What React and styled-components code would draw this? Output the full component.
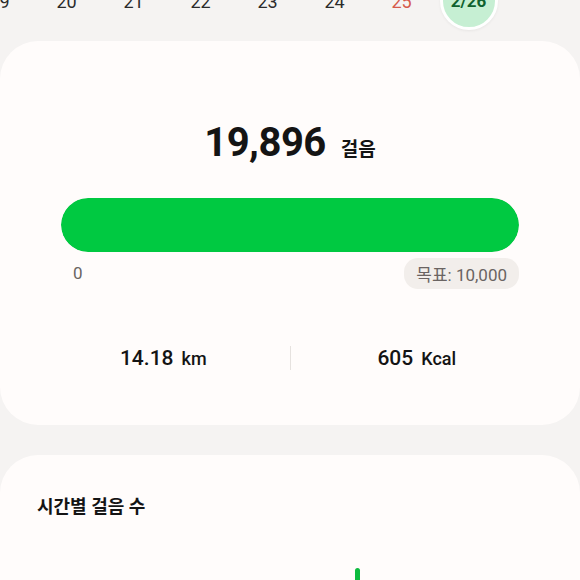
import React from "react";
import styled, { createGlobalStyle } from "styled-components";

const GlobalStyle = createGlobalStyle`
  html, body {
    margin: 0;
    padding: 0;
    background: #f5f3f2;
    overflow: hidden;
  }
  body {
    font-family: "Roboto", "Noto Sans CJK KR", sans-serif;
    color: #141414;
  }
`;

const Page = styled.div`
  width: 580px;
  height: 580px;
  display: flex;
  flex-direction: column;
  overflow: hidden;
`;

const DateStrip = styled.div`
  display: flex;
  margin-top: -28px;
  margin-left: -34px;
  height: 58px;
  flex-shrink: 0;
`;

const DateItem = styled.div`
  width: 67px;
  flex-shrink: 0;
  display: flex;
  align-items: center;
  justify-content: center;
  font-size: 18px;
  color: ${(p) => (p.$holiday ? "#d65a4c" : "#2b2b2b")};
`;

const TodayBubble = styled.div`
  width: 52px;
  height: 52px;
  border-radius: 50%;
  background: #c6efd3;
  border: 3px solid #ffffff;
  box-shadow: 0 1px 3px rgba(0, 0, 0, 0.06);
  display: flex;
  align-items: center;
  justify-content: center;
  font-size: 17px;
  font-weight: 700;
  color: #10622f;
`;

const Card = styled.section`
  background: #fffcfb;
  border-radius: 38px;
  flex-shrink: 0;
  display: flex;
  flex-direction: column;
  margin-top: ${(p) => p.$gap || 0}px;
`;

const StepsCard = styled(Card)`
  height: 384px;
  padding: 78px 61px 0;
  box-sizing: border-box;
`;

const Total = styled.div`
  display: flex;
  justify-content: center;
  align-items: baseline;
  gap: 15px;
  height: 50px;
`;

const TotalNumber = styled.span`
  font-size: 40px;
  font-weight: 700;
  letter-spacing: -0.5px;
`;

const TotalUnit = styled.span`
  font-size: 19px;
  font-weight: 700;
`;

const Track = styled.div`
  margin-top: 29px;
  height: 54px;
  border-radius: 27px;
  background: #eceae8;
  overflow: hidden;
`;

const Fill = styled.div`
  height: 100%;
  border-radius: 27px;
  background: #00c941;
`;

const Scale = styled.div`
  margin-top: 7px;
  display: flex;
  justify-content: space-between;
  align-items: center;
  height: 28px;
`;

const ScaleStart = styled.span`
  font-size: 17px;
  color: #6a6462;
  padding-left: 12px;
`;

const GoalPill = styled.span`
  background: #f2eeeb;
  border-radius: 14px;
  padding: 3px 12px;
  font-size: 17px;
  color: #6a6462;
`;

const Stats = styled.div`
  margin-top: 59px;
  display: grid;
  grid-template-columns: 1fr 1px 1fr;
  align-items: center;
  margin-left: -24px;
  margin-right: -24px;
`;

const Stat = styled.div`
  display: flex;
  justify-content: center;
  align-items: baseline;
  gap: 8px;
`;

const StatValue = styled.span`
  font-size: 21px;
  font-weight: 500;
`;

const StatUnit = styled.span`
  font-size: 18px;
  font-weight: 500;
`;

const Divider = styled.div`
  width: 1px;
  height: 24px;
  background: #e6e2df;
`;

const HourlyCard = styled(Card)`
  height: 300px;
  padding: 40px 46px 0 37px;
  box-sizing: border-box;
`;

const Title = styled.h2`
  margin: 0;
  font-size: 18px;
  font-weight: 700;
  line-height: 24px;
`;

const Chart = styled.div`
  margin-top: 49px;
  height: 160px;
  display: grid;
  grid-template-columns: repeat(24, 1fr);
  align-items: end;
`;

const BarSlot = styled.div`
  display: flex;
  justify-content: center;
  align-items: flex-end;
  height: 100%;
`;

const Bar = styled.div`
  width: 5px;
  border-radius: 3px 3px 0 0;
  background: #0dbb3f;
`;

const dates = ["19", "20", "21", "22", "23", "24", "25"];
const hourly = [0, 0, 0, 0, 0, 0, 0, 0, 0, 0, 0, 0, 0, 0, 0, 4200, 0, 0, 0, 0, 0, 0, 0, 0];
const steps = 19896;
const goal = 10000;
const maxHour = 4200;

export default function App() {
  const pct = Math.min(100, (steps / goal) * 100);
  return (
    <>
      <GlobalStyle />
      <Page>
        <DateStrip>
          {dates.map((d) => (
            <DateItem key={d} $holiday={d === "25"}>
              {d}
            </DateItem>
          ))}
          <DateItem>
            <TodayBubble>2/26</TodayBubble>
          </DateItem>
        </DateStrip>

        <StepsCard $gap={11}>
          <Total>
            <TotalNumber>19,896</TotalNumber>
            <TotalUnit>걸음</TotalUnit>
          </Total>
          <Track>
            <Fill style={{ width: `${pct}%` }} />
          </Track>
          <Scale>
            <ScaleStart>0</ScaleStart>
            <GoalPill>목표: 10,000</GoalPill>
          </Scale>
          <Stats>
            <Stat>
              <StatValue>14.18</StatValue>
              <StatUnit>km</StatUnit>
            </Stat>
            <Divider />
            <Stat>
              <StatValue>605</StatValue>
              <StatUnit>Kcal</StatUnit>
            </Stat>
          </Stats>
        </StepsCard>

        <HourlyCard $gap={30}>
          <Title>시간별 걸음 수</Title>
          <Chart>
            {hourly.map((v, i) => (
              <BarSlot key={i}>
                {v > 0 && <Bar style={{ height: `${(v / maxHour) * 100}%` }} />}
              </BarSlot>
            ))}
          </Chart>
        </HourlyCard>
      </Page>
    </>
  );
}
